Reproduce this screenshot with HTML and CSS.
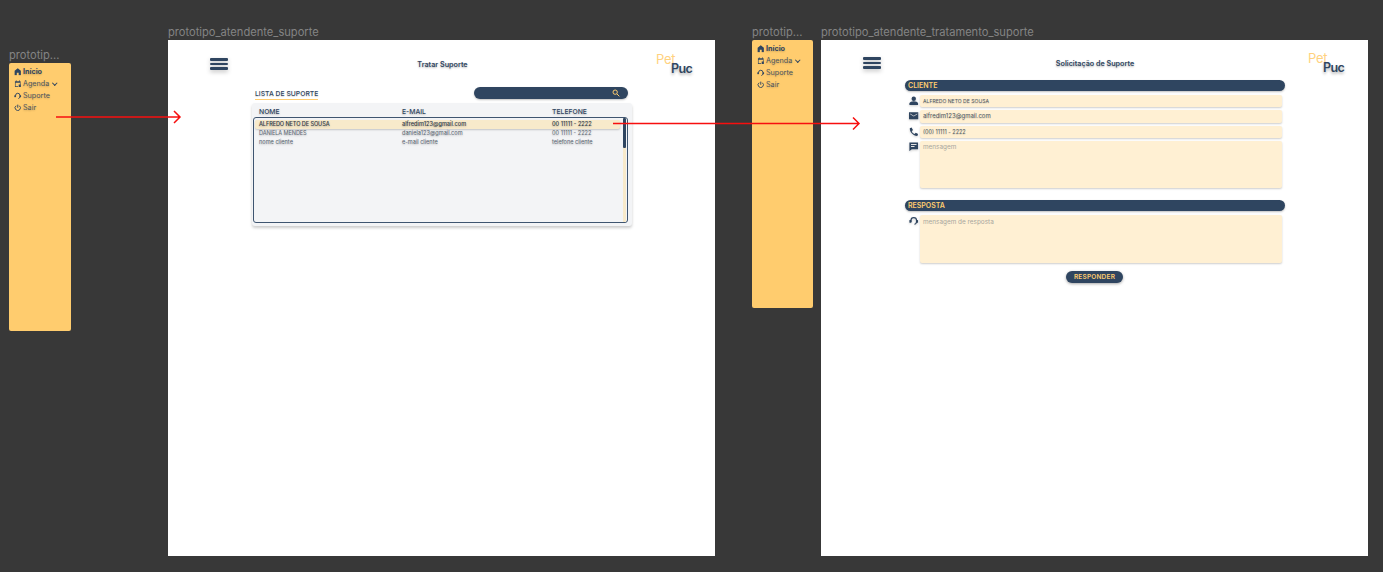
FILE: index.html
```html
<!DOCTYPE html>
<html lang="pt-BR">
<head>
    <meta charset="UTF-8">
    <title>prototipo atendente suporte</title>
    <link rel="stylesheet" href="styles.css">
</head>
<body>
    <svg width="0" height="0" class="defs">
        <symbol id="i-home" viewBox="0 0 24 24"><path d="M12 1 2 9v14h7v-8h6v8h7V9z"/></symbol>
        <symbol id="i-cal" viewBox="0 0 24 24"><path d="M6 1h2v3h8V1h2v3h3v11h-2V9H5v11h8v2H3V4h3zM15 14h7v8h-7z"/></symbol>
        <symbol id="i-head" viewBox="0 0 24 24"><path fill="none" stroke="currentColor" stroke-width="3" d="M5 15V11a7 7 0 0 1 14 0v4a7 7 0 0 1-5 6"/><rect x="1" y="10" width="5" height="7" rx="1.5"/><rect x="18" y="10" width="5" height="7" rx="1.5"/></symbol>
        <symbol id="i-power" viewBox="0 0 24 24"><path fill="none" stroke="currentColor" stroke-width="3" d="M12 2v10M7 5.500a8.500 8.500 0 1 0 10 0"/></symbol>
        <symbol id="i-user" viewBox="0 0 24 24"><circle cx="12" cy="7" r="5.500"/><path d="M1 23v-4c0-3.500 7-5.500 11-5.500s11 2 11 5.500v4z"/></symbol>
        <symbol id="i-mail" viewBox="0 0 24 24"><path d="M0 3h24v18H0zm3 3v2l9 6 9-6V6l-9 6z" fill-rule="evenodd"/></symbol>
        <symbol id="i-phone" viewBox="0 0 24 24"><path d="M6.500 1 2 3C1.500 13 11 23 21 22.500l2-5-6-3-3 3c-3-1-6-4-7-7l3-3z"/></symbol>
        <symbol id="i-chat" viewBox="0 0 24 24"><path d="M1 1h22v17H7l-6 5zm4 4v2.500h14V5zm0 5v2.500h9V10z" fill-rule="evenodd"/></symbol>
        <symbol id="i-search" viewBox="0 0 24 24"><path fill="none" stroke="currentColor" stroke-width="3" d="M15 15l7 7M16 9.500a6.500 6.500 0 1 1-13 0 6.500 6.500 0 0 1 13 0z"/></symbol>
    </svg>

    <span class="frame-name name-side1">prototip...</span>
    <nav class="side side1">
        <a class="side-item active"><svg class="ic"><use href="#i-home"/></svg>Início</a>
        <a class="side-item"><svg class="ic"><use href="#i-cal"/></svg>Agenda<span class="chev"></span></a>
        <a class="side-item"><svg class="ic"><use href="#i-head"/></svg>Suporte</a>
        <a class="side-item"><svg class="ic"><use href="#i-power"/></svg>Sair</a>
    </nav>

    <span class="frame-name name-frame1">prototipo_atendente_suporte</span>
    <section class="frame frame1">
        <header class="top top1">
            <div class="burger"><span></span><span></span><span></span></div>
            <h1>Tratar Suporte</h1>
            <div class="logo"><span class="pet">Pet</span><span class="puc">Puc</span></div>
        </header>
        <div class="list-area">
            <div class="list-head">
                <h2>LISTA DE SUPORTE</h2>
                <div class="search"><svg class="ic-search"><use href="#i-search"/></svg></div>
            </div>
            <div class="panel">
                <div class="row row-head"><span>NOME</span><span>E-MAIL</span><span>TELEFONE</span></div>
                <div class="table-box">
                    <div class="row row-sel"><span class="caps">ALFREDO NETO DE SOUSA</span><span>alfredim123@gmail.com</span><span>00 11111 - 2222</span></div>
                    <div class="row"><span class="caps">DANIELA MENDES</span><span>daniela123@gmail.com</span><span>00 11111 - 2222</span></div>
                    <div class="row"><span>nome cliente</span><span>e-mail cliente</span><span>telefone cliente</span></div>
                    <i class="scroll-track"></i>
                    <i class="scroll-thumb"></i>
                </div>
            </div>
        </div>
    </section>

    <span class="frame-name name-side2">prototip...</span>
    <nav class="side side2">
        <a class="side-item active"><svg class="ic"><use href="#i-home"/></svg>Início</a>
        <a class="side-item"><svg class="ic"><use href="#i-cal"/></svg>Agenda<span class="chev"></span></a>
        <a class="side-item"><svg class="ic"><use href="#i-head"/></svg>Suporte</a>
        <a class="side-item"><svg class="ic"><use href="#i-power"/></svg>Sair</a>
    </nav>

    <span class="frame-name name-frame2">prototipo_atendente_tratamento_suporte</span>
    <section class="frame frame2">
        <header class="top top2">
            <div class="burger"><span></span><span></span><span></span></div>
            <h1>Solicitação de Suporte</h1>
            <div class="logo"><span class="pet">Pet</span><span class="puc">Puc</span></div>
        </header>
        <div class="form-area">
            <div class="bar">CLIENTE</div>
            <div class="fields">
                <div class="field"><svg class="ic-f"><use href="#i-user"/></svg><div class="box upper">ALFREDO NETO DE SOUSA</div></div>
                <div class="field"><svg class="ic-f"><use href="#i-mail"/></svg><div class="box">alfredim123@gmail.com</div></div>
                <div class="field"><svg class="ic-f"><use href="#i-phone"/></svg><div class="box phone">(00) 11111 - 2222</div></div>
                <div class="field"><svg class="ic-f"><use href="#i-chat"/></svg><div class="box area area1">mensagem</div></div>
            </div>
            <div class="bar bar2">RESPOSTA</div>
            <div class="fields">
                <div class="field"><svg class="ic-f"><use href="#i-head"/></svg><div class="box area area2">mensagem de resposta</div></div>
            </div>
            <button class="btn" type="button">RESPONDER</button>
        </div>
    </section>

    <svg class="arrows" width="1383" height="572" viewBox="0 0 1383 572">
        <path d="M56 117H180M174 111l6 6-6 6"/>
        <path d="M613 123.500H859M853 117.500l6 6-6 6"/>
    </svg>
</body>
</html>
```

FILE: styles.css
```css
body {
    margin: 0;
    width: 1383px;
    height: 572px;
    overflow: hidden;
    position: relative;
    background-color: #383838;
    font-family: Inter, "Liberation Sans", sans-serif;
    color: #2f4560;
}
.defs {
    position: absolute;
}

/* things placed on the canvas */
.frame-name {
    position: absolute;
    font-size: 11.130px;
    line-height: 14px;
    color: #848484;
    white-space: nowrap;
}
.name-side1 { left: 9px; top: 48px; }
.name-frame1 { left: 168px; top: 25px; }
.name-side2 { left: 752px; top: 25px; }
.name-frame2 { left: 821px; top: 25px; }

.side {
    position: absolute;
    width: 62px;
    height: 268px;
    box-sizing: border-box;
    padding: 3px 0 0 5px;
    background-color: #ffcc6e;
    border-radius: 2px;
}
.side1 { left: 9px; top: 63px; }
.side2 { left: 752px; top: 40px; width: 61px; }
.side-item {
    display: flex;
    align-items: center;
    gap: 1.500px;
    height: 11.800px;
    font-size: 7.200px;
    color: #4a5560;
    text-shadow: 0 1px 2px rgba(0, 0, 0, 0.2);
}
.side-item.active {
    font-weight: 700;
    color: #2f4560;
}
.ic {
    width: 7.500px;
    height: 7.500px;
    fill: #2f4560;
    color: #2f4560;
    flex-shrink: 0;
}
.chev {
    width: 2.500px;
    height: 2.500px;
    margin: -2px 0 0 2.500px;
    border-right: 1px solid #2f4560;
    border-bottom: 1px solid #2f4560;
    transform: rotate(45deg);
}
.frame {
    position: absolute;
    top: 40px;
    width: 547px;
    height: 516px;
    background-color: #fff;
}
.frame1 { left: 168px; }
.frame2 { left: 821px; }
.arrows {
    position: absolute;
    left: 0;
    top: 0;
    fill: none;
    stroke: #f70f0f;
    stroke-width: 1.500px;
}

/* frame header */
.top {
    display: flex;
    align-items: center;
    justify-content: space-between;
    height: 48px;
    padding: 0 24px 0 42px;
}
.top2 {
    margin-top: -1px;
    padding-right: 25px;
}
.top h1 {
    margin: 0 0 0 1px;
    font-size: 7.200px;
    font-weight: 600;
    text-shadow: 0 1px 2px rgba(0, 0, 0, 0.3);
}
.burger {
    display: flex;
    flex-direction: column;
    gap: 2px;
    width: 18px;
    filter: drop-shadow(0 2px 2px rgba(0, 0, 0, 0.25));
}
.burger span {
    height: 2.500px;
    border-radius: 1px;
    background-color: #2f4560;
}
.logo {
    display: flex;
    flex-direction: column;
    width: 35px;
    line-height: 10px;
}
.pet {
    font-size: 13px;
    letter-spacing: -0.300px;
    color: #ffd27f;
}
.puc {
    margin-left: 15px;
    font-size: 12.500px;
    font-weight: 600;
    letter-spacing: -0.600px;
    color: #2f4560;
    text-shadow: 0 2px 3px rgba(0, 0, 0, 0.3);
}

/* list screen */
.list-area {
    width: 380px;
    margin: -1px 0 0 84px;
}
.list-head {
    display: flex;
    align-items: flex-start;
    justify-content: space-between;
    height: 16px;
    padding: 0 4px 0 3px;
}
.list-head h2 {
    margin: 3px 0 0;
    font-size: 6.800px;
    line-height: 8.500px;
    font-weight: 500;
    border-bottom: 1px solid #ffcc6e;
    text-shadow: 0 1px 1px rgba(0, 0, 0, 0.15);
}
.search {
    display: flex;
    align-items: center;
    justify-content: flex-end;
    width: 154px;
    height: 12px;
    padding-right: 8px;
    box-sizing: border-box;
    background-color: #2f4560;
    border-radius: 6px;
    box-shadow: 0 1px 2px rgba(0, 0, 0, 0.25);
}
.ic-search {
    width: 8px;
    height: 8px;
    color: #ffcc6e;
    fill: none;
}
.panel {
    height: 123px;
    box-sizing: border-box;
    padding-top: 4px;
    background-color: #f3f4f6;
    border-radius: 3px;
    box-shadow: 0 2px 3px rgba(0, 0, 0, 0.2);
}
.row {
    display: grid;
    grid-template-columns: 143px 150px 1fr;
    height: 9px;
    padding-left: 5px;
    font-size: 5.600px;
    line-height: 9px;
    color: #5a6672;
    text-shadow: 0 1px 2px rgba(0, 0, 0, 0.25);
    white-space: nowrap;
}
.caps {
    letter-spacing: -0.100px;
}
.row-head {
    height: 10px;
    padding-left: 7px;
    font-size: 6.800px;
    line-height: 9px;
    font-weight: 500;
    color: #2f4560;
}
.table-box {
    position: relative;
    height: 106px;
    width: 375px;
    box-sizing: border-box;
    margin-left: 1px;
    padding-top: 2px;
    border: 1px solid #3f5570;
    border-radius: 3px;
}
.row-sel {
    width: 365px;
    box-sizing: border-box;
    margin-left: 1px;
    padding-left: 4px;
    background-color: #f8eacb;
    border-radius: 2px;
    font-weight: 500;
    color: #2f3a46;
    box-shadow: 0 1px 2px rgba(0, 0, 0, 0.2);
}
.scroll-track {
    position: absolute;
    right: 1px;
    top: 0;
    bottom: 0;
    width: 3px;
    background-color: #f8eacb;
}
.scroll-thumb {
    position: absolute;
    right: 1px;
    top: 0;
    width: 3px;
    height: 30px;
    border-radius: 1px;
    background-color: #2f4560;
}

/* answer screen */
.form-area {
    display: flex;
    flex-direction: column;
    width: 380px;
    margin: -7px 0 0 84px;
}
.bar {
    height: 11px;
    padding-left: 3px;
    font-size: 7px;
    line-height: 11px;
    font-weight: 600;
    color: #ffcc6e;
    background-color: #2f4560;
    border-radius: 6px;
    box-shadow: 0 1px 2px rgba(0, 0, 0, 0.25);
}
.bar2 { margin-top: 12px; }
.fields {
    display: flex;
    flex-direction: column;
    gap: 3px;
    margin-top: 4px;
}
.field {
    display: flex;
    align-items: flex-start;
    gap: 1.500px;
    padding-left: 4px;
}
.ic-f {
    width: 9.500px;
    height: 9.500px;
    margin-top: 1px;
    flex-shrink: 0;
    fill: #2f4560;
    color: #2f4560;
    filter: drop-shadow(0 1px 1px rgba(0, 0, 0, 0.2));
}
.box {
    width: 362px;
    height: 12.300px;
    box-sizing: border-box;
    padding-left: 3px;
    font-size: 6px;
    line-height: 12px;
    color: #4a5560;
    background-color: #fff0d3;
    border-radius: 2px;
    box-shadow: 0 1px 2px rgba(0, 0, 0, 0.2);
    text-shadow: 0 1px 1px rgba(0, 0, 0, 0.15);
}
.box.upper {
    font-size: 5.100px;
}
.box.phone {
    font-size: 5.500px;
}
.box.area {
    font-size: 6.400px;
    color: #a8a69e;
    text-shadow: none;
}
.box.area1,
.box.area2 { height: 47.500px; }
.box.area2 { padding-top: 1px; }
.btn {
    align-self: center;
    width: 57px;
    height: 12px;
    margin: 8px 0 0 -1px;
    padding: 0;
    border: none;
    border-radius: 6px;
    font-family: inherit;
    font-size: 6.500px;
    font-weight: 600;
    letter-spacing: 0.200px;
    color: #ffcc6e;
    background-color: #2f4560;
    box-shadow: 0 1px 3px rgba(0, 0, 0, 0.35);
}
```
